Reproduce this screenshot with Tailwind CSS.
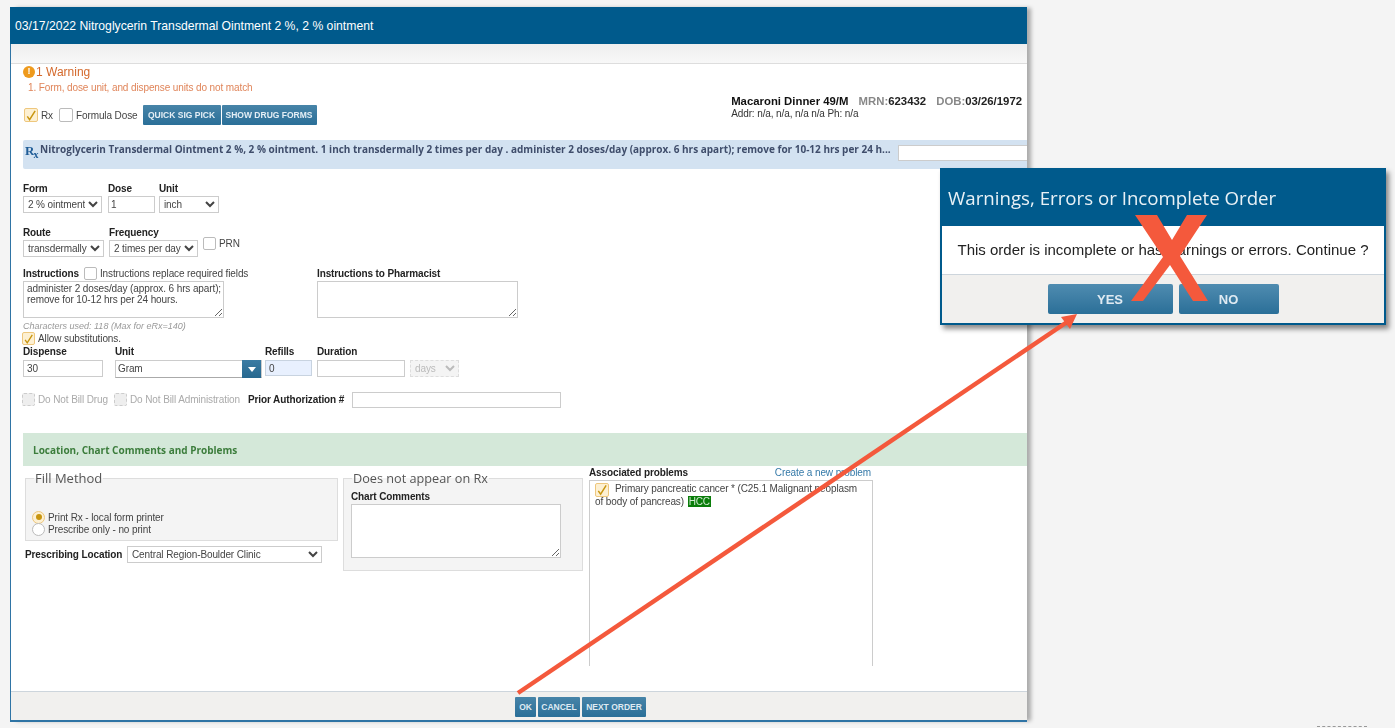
<!DOCTYPE html>
<html lang="en">
<head>
    <meta charset="UTF-8">
    <title>Order</title>
    <script src="https://cdn.jsdelivr.net/npm/@tailwindcss/browser@4"></script>
</head>
<body class="relative w-[1395px] h-[728px] overflow-hidden bg-[#f4f4f4] font-['Liberation_Sans',sans-serif] text-[10px] text-[#444]">

    <!-- order window -->
    <div class="ml-[10px] mt-[7px] w-[1017px] h-[715px] flex flex-col bg-white border-l border-b-2 border-[#2f74a5] shadow-[5px_0_4px_-1px_rgba(0,0,0,0.3)] blur-[0.35px]">
        <div class="h-[37px] -ml-[1px] shrink-0 flex items-center pl-[5px] pt-[2px] bg-[#005a8c] text-white text-[12.2px]">03/17/2022 Nitroglycerin Transdermal Ointment 2 %, 2 % ointment</div>
        <div class="h-[20px] shrink-0 bg-gradient-to-b from-[#eeeeee] to-[#f8f8f8] border-b border-[#ddd]"></div>

        <div class="flex-1 overflow-hidden pl-[12px] tracking-[-0.11px]">
            <!-- warning -->
            <div class="flex items-center h-[14px] mt-[1px] text-[#d4692c] text-[12px] tracking-normal">
                <span class="w-[12px] h-[12px] rounded-full bg-[#ee9a1d] text-white text-[9px] font-bold flex items-center justify-center">!</span>
                <span class="ml-[1px]">1 Warning</span>
            </div>
            <div class="h-[12px] mt-[3px] ml-[5px] text-[#e0855a] leading-[12px]">1. Form, dose unit, and dispense units do not match</div>

            <div class="flex h-[24px] mt-[4px]">
                <div class="flex items-center mt-[7px] ml-[1px] h-[20px]">
                    <span class="w-[14px] h-[14px] border border-[#eec77d] bg-[#fdf0d2] rounded-[2px] flex items-center justify-center">
                        <svg width="13" height="13" viewBox="0 0 13 13"><path d="M2.5 7.5 L5 11 L11 1.5" fill="none" stroke="#c8950f" stroke-width="1.6"/></svg>
                    </span>
                    <span class="ml-[3px] mr-[6px]">Rx</span>
                    <span class="w-[14px] h-[14px] border border-[#bbb] bg-white rounded-[2px]"></span>
                    <span class="ml-[3px] mr-[5px]">Formula Dose</span>
                    <button class="h-[20px] w-[78px] rounded-[1px] bg-gradient-to-b from-[#4784a8] to-[#2a6f98] text-[#e4eef5] text-[8.5px] font-bold tracking-normal">QUICK SIG PICK</button>
                    <button class="h-[20px] w-[95px] ml-[1px] rounded-[1px] bg-gradient-to-b from-[#4784a8] to-[#2a6f98] text-[#e4eef5] text-[8.5px] font-bold tracking-normal">SHOW DRUG FORMS</button>
                </div>
                <div class="ml-auto pr-[5px] -mt-[3px]">
                    <div class="text-[11.35px] font-bold text-[#111] leading-[13px] tracking-normal">Macaroni Dinner 49/M <span class="ml-[7px] text-[#888]">MRN:</span><span class="text-[#222]">623432</span> <span class="ml-[7px] text-[#888]">DOB:</span><span class="text-[#222]">03/26/1972</span></div>
                    <div class="leading-[11px] text-[#333]">Addr: n/a, n/a, n/a n/a Ph: n/a</div>
                </div>
            </div>

            <!-- sig banner -->
            <div class="h-[29px] mt-[18px] flex items-start bg-[#d3e2f1] pl-[2px] rounded-l-[2px] tracking-normal">
                <span class="w-[15px] shrink-0 mt-[3px] font-['Liberation_Serif',serif] font-bold text-[#1f5c96] text-[13px] leading-[16px]">R<sub class="text-[10px] -ml-[1px]">x</sub></span>
                <span class="mt-[2px] font-['Open_Sans',sans-serif] font-bold text-[#3f4d6b] text-[10px] leading-[14px] whitespace-nowrap">Nitroglycerin Transdermal Ointment 2 %, 2 % ointment. 1 inch transdermally 2 times per day . administer 2 doses/day (approx. 6 hrs apart); remove for 10-12 hrs per 24 h...</span>
                <input class="ml-auto shrink-0 mt-[5px] w-[129px] h-[16px] bg-white border border-[#ccc] border-r-0" />
            </div>

            <!-- form / dose / unit -->
            <div class="flex mt-[14px] h-[30px]">
                <label class="w-[85px] font-bold text-[#222] leading-[11px]">Form
                    <select class="block mt-[2px] w-[79px] h-[17px] border border-[#ccc] bg-white font-normal text-[10px] text-[#444]"><option>2 % ointment</option></select>
                </label>
                <label class="w-[51px] font-bold text-[#222] leading-[11px]">Dose
                    <input value="1" class="block mt-[2px] w-[47px] h-[17px] border border-[#ccc] font-normal text-[#444] pl-[2px]" />
                </label>
                <label class="font-bold text-[#222] leading-[11px]">Unit
                    <select class="block mt-[2px] w-[60px] h-[17px] border border-[#ccc] bg-white font-normal text-[10px] text-[#444]"><option>inch</option></select>
                </label>
            </div>

            <!-- route / frequency -->
            <div class="flex mt-[14px] h-[30px]">
                <label class="w-[86px] font-bold text-[#222] leading-[11px]">Route
                    <select class="block mt-[2px] w-[81px] h-[17px] border border-[#ccc] bg-white font-normal text-[10px] text-[#444]"><option>transdermally</option></select>
                </label>
                <label class="w-[94px] font-bold text-[#222] leading-[11px]">Frequency
                    <select class="block mt-[2px] w-[89px] h-[17px] border border-[#ccc] bg-white font-normal text-[10px] text-[#444]"><option>2 times per day</option></select>
                </label>
                <div class="flex items-start mt-[10px]">
                    <span class="w-[13px] h-[13px] border border-[#bbb] rounded-[2px]"></span>
                    <span class="ml-[3px] mt-[1px] leading-[11px]">PRN</span>
                </div>
            </div>

            <!-- instructions -->
            <div class="flex mt-[7px] h-[54px]">
                <div class="w-[294px]">
                    <div class="flex items-center h-[17px] pt-[1px]">
                        <span class="font-bold text-[#222]">Instructions</span>
                        <span class="ml-[5px] w-[13px] h-[13px] border border-[#bbb] rounded-[2px]"></span>
                        <span class="ml-[3px]">Instructions replace required fields</span>
                    </div>
                    <textarea wrap="off" class="block w-[201px] h-[37px] border border-[#ccc] text-[10px] leading-[11px] text-[#444] px-[3px] py-[1px] overflow-hidden">administer 2 doses/day (approx. 6 hrs apart);
remove for 10-12 hrs per 24 hours.</textarea>
                </div>
                <div>
                    <div class="flex items-center h-[17px] pt-[1px] font-bold text-[#222]">Instructions to Pharmacist</div>
                    <textarea class="block w-[201px] h-[37px] border border-[#ccc]"></textarea>
                </div>
            </div>

            <div class="mt-[3px] h-[11px] text-[9px] italic text-[#999] leading-[11px] tracking-normal">Characters used: 118 (Max for eRx=140)</div>
            <div class="flex items-center h-[13px] -ml-[1px]">
                <span class="w-[13px] h-[13px] border border-[#eec77d] bg-[#fdf0d2] rounded-[2px] flex items-center justify-center">
                    <svg width="12" height="12" viewBox="0 0 13 13"><path d="M2.5 7.5 L5 11 L11 1.5" fill="none" stroke="#c8950f" stroke-width="1.6"/></svg>
                </span>
                <span class="ml-[3px]">Allow substitutions.</span>
            </div>

            <!-- dispense -->
            <div class="flex mt-[1px] h-[33px]">
                <label class="w-[92px] font-bold text-[#222] leading-[11px]">Dispense
                    <input value="30" class="block mt-[3px] w-[80px] h-[17px] border border-[#ccc] font-normal text-[#444] pl-[3px]" />
                </label>
                <div class="w-[150px] font-bold text-[#222] leading-[11px]">Unit
                    <div class="flex mt-[3px] w-[147px] h-[18px] border border-[#ccc] border-b-[#aaa]">
                        <span class="flex-1 font-normal text-[#444] pl-[2px] leading-[16px]">Gram</span>
                        <span class="w-[19px] -my-[1px] bg-gradient-to-b from-[#3a7ba3] to-[#27688f] flex items-center justify-center">
                            <svg width="8" height="5" viewBox="0 0 8 5"><path d="M0 0 H8 L4 5 Z" fill="#fff"/></svg>
                        </span>
                    </div>
                </div>
                <label class="w-[52px] font-bold text-[#222] leading-[11px]">Refills
                    <input value="0" class="block mt-[3px] w-[47px] h-[16px] border border-[#c8d3e0] bg-[#e8f0fe] font-normal text-[#444] pl-[3px]" />
                </label>
                <label class="w-[93px] font-bold text-[#222] leading-[11px]">Duration
                    <input class="block mt-[3px] w-[88px] h-[17px] border border-[#ccc]" />
                </label>
                <select disabled class="mt-[14px] w-[49px] h-[17px] border border-dashed border-[#ddd] bg-[#f4f4f4] text-[10px] text-[#bbb]"><option>days</option></select>
            </div>

            <!-- billing -->
            <div class="flex items-center mt-[12px] h-[17px] -ml-[1px]">
                <span class="w-[13px] h-[13px] border border-dashed border-[#ccc] bg-[#eee] rounded-[2px]"></span>
                <span class="ml-[3px] w-[76px] text-[#aaa]">Do Not Bill Drug</span>
                <span class="w-[13px] h-[13px] border border-dashed border-[#ccc] bg-[#eee] rounded-[2px]"></span>
                <span class="ml-[3px] w-[118px] text-[#aaa] whitespace-nowrap">Do Not Bill Administration</span>
                <span class="w-[104px] font-bold text-[#222]">Prior Authorization #</span>
                <input class="w-[209px] h-[16px] border border-[#ccc]" />
            </div>

            <!-- section header -->
            <div class="h-[33px] mt-[25px] flex items-center pl-[10px] pt-[1px] bg-[#d4e8d9] font-['Open_Sans',sans-serif] font-bold text-[#3c7d3c] text-[10px] tracking-normal">Location, Chart Comments and Problems</div>

            <div class="flex h-[200px]">
                <div class="w-[320px] pl-[2px]">
                    <fieldset class="w-[313px] h-[70px] mt-[5px] border border-[#ddd] bg-[#f4f4f4] pl-[8px]">
                        <legend class="px-[1px] font-['Open_Sans',sans-serif] text-[13px] leading-[14px] text-[#555] tracking-normal">Fill Method</legend>
                        <div class="mt-[26px] -ml-[1px] leading-[11px]">
                            <div class="flex items-center h-[12px]">
                                <span class="w-[13px] h-[13px] rounded-full border border-[#eec77d] bg-[#fdf0d2] flex items-center justify-center -ml-[1px]"><span class="w-[6px] h-[6px] rounded-full bg-[#c8950f]"></span></span>
                                <span class="ml-[3px]">Print Rx - local form printer</span>
                            </div>
                            <div class="flex items-center h-[12px]">
                                <span class="w-[13px] h-[13px] rounded-full border border-[#bbb] bg-white -ml-[1px]"></span>
                                <span class="ml-[3px]">Prescribe only - no print</span>
                            </div>
                        </div>
                    </fieldset>
                    <div class="flex items-center mt-[5px] h-[17px]">
                        <span class="font-bold text-[#222] w-[102px]">Prescribing Location</span>
                        <select class="w-[195px] h-[17px] border border-[#ccc] bg-white text-[10px] text-[#444]"><option>Central Region-Boulder Clinic</option></select>
                    </div>
                </div>
                <fieldset class="w-[240px] h-[100px] mt-[5px] border border-[#ddd] bg-[#f4f4f4] pl-[7px]">
                    <legend class="ml-[1px] px-[1px] font-['Open_Sans',sans-serif] text-[12.7px] leading-[14px] text-[#555] tracking-normal">Does not appear on Rx</legend>
                    <div class="font-bold text-[#222] leading-[11px] mt-[6px]">Chart Comments</div>
                    <textarea class="block mt-[2px] w-[210px] h-[54px] border border-[#ccc] bg-white"></textarea>
                </fieldset>
                <div class="w-[284px] ml-[6px]">
                    <div class="flex justify-between h-[15px] -mt-[1px] items-start pr-[2px]">
                        <span class="font-bold text-[#222]">Associated problems</span>
                        <span class="text-[#3479a8]">Create a new problem</span>
                    </div>
                    <div class="h-[186px] border border-[#ccc] border-b-0 pl-[5px] pt-[1px] leading-[12px]">
                        <div class="flex items-center h-[14px]">
                            <span class="w-[14px] h-[14px] mt-[2px] border border-[#eec77d] bg-[#fdf0d2] rounded-[2px] flex items-center justify-center">
                                <svg width="12" height="12" viewBox="0 0 13 13"><path d="M2.5 7.5 L5 11 L11 1.5" fill="none" stroke="#c8950f" stroke-width="1.6"/></svg>
                            </span>
                            <span class="ml-[6px] whitespace-nowrap">Primary pancreatic cancer * (C25.1 Malignant neoplasm</span>
                        </div>
                        <div>of body of pancreas) <span class="ml-[1px] px-[1px] bg-[#0a7d0a] text-[#cfe9cf]">HCC</span></div>
                    </div>
                </div>
            </div>
        </div>

        <!-- footer -->
        <div class="h-[29px] shrink-0 flex items-center gap-[2px] pl-[504px] pt-[2px] bg-[#f1f0ee] border-t border-[#cdd5dc]">
            <button class="w-[21px] h-[20px] rounded-[1px] bg-gradient-to-b from-[#4784a8] to-[#2a6f98] text-[#dfeaf2] text-[8.5px] font-bold">OK</button>
            <button class="w-[42px] h-[20px] rounded-[1px] bg-gradient-to-b from-[#4784a8] to-[#2a6f98] text-[#dfeaf2] text-[8.5px] font-bold">CANCEL</button>
            <button class="w-[64px] h-[20px] rounded-[1px] bg-gradient-to-b from-[#4784a8] to-[#2a6f98] text-[#dfeaf2] text-[8.5px] font-bold">NEXT ORDER</button>
        </div>
    </div>

    <!-- warning dialog -->
    <div class="absolute left-[940px] top-[168px] w-[446px] h-[157px] flex flex-col border-2 border-[#005a8c] bg-white shadow-[3px_4px_5px_rgba(0,0,0,0.45)] blur-[0.35px]">
        <div class="h-[56px] flex items-end pb-[16px] pl-[6px] bg-[#005a8c] text-[#e8f1f6] font-['Open_Sans',sans-serif] text-[18.7px] leading-[24px]">Warnings, Errors or Incomplete Order</div>
        <div class="h-[48px] flex items-center justify-center text-[15px] text-[#222]">This order is incomplete or has warnings or errors. Continue ?</div>
        <div class="flex-1 flex justify-center items-start gap-[6px] pt-[9px] bg-[#f1f0ee] border-t border-[#cdd5dc]">
            <button class="w-[125px] h-[30px] pt-[2px] rounded-[2px] bg-gradient-to-b from-[#4f8cb0] to-[#2a6f98] text-[#dfeaf2] text-[13px] font-bold">YES</button>
            <button class="w-[100px] h-[30px] pt-[2px] rounded-[2px] bg-gradient-to-b from-[#4f8cb0] to-[#2a6f98] text-[#dfeaf2] text-[13px] font-bold">NO</button>
        </div>
    </div>

    <!-- cut off dashes at the bottom edge -->
    <div class="absolute left-[1317px] top-[726px] w-[50px] border-t border-dashed border-[#999]"></div>

    <!-- annotation: red arrow and cross -->
    <svg class="absolute left-0 top-0" width="1395" height="728" viewBox="0 0 1395 728">
        <line x1="518" y1="693" x2="1070" y2="320" stroke="#f4593c" stroke-width="4.5"/>
        <polygon points="1077,314 1061,317 1070,329" fill="#f4593c"/>
        <polygon points="1135,215 1157,215 1172,240 1187,215 1207,215 1180,256 1208,301 1193,301 1170,265 1143,301 1131,301 1163,257" fill="#f4593c"/>
    </svg>
</body>
</html>
